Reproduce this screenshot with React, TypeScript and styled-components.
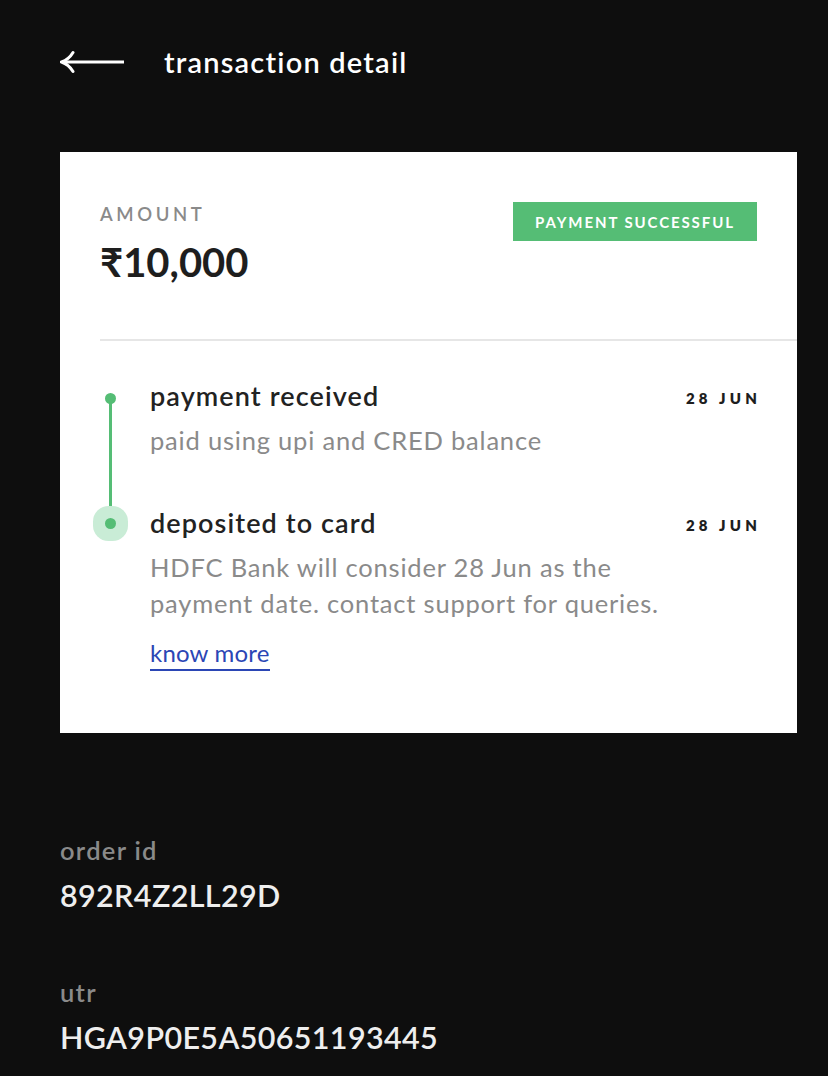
import React from "react";
import styled, { createGlobalStyle } from "styled-components";

const Global = createGlobalStyle`
  html, body { margin: 0; padding: 0; background: #0e0e0e; }
  body { font-family: "Lato", "Open Sans", sans-serif; -webkit-font-smoothing: antialiased; }
  * { box-sizing: border-box; }
`;

const Page = styled.div`
  width: 828px;
  min-height: 1076px;
  padding: 0 31px 0 60px;
  background: #0e0e0e;
`;

const Header = styled.header`
  display: flex;
  align-items: center;
  gap: 40px;
  height: 124px;
`;

const BackButton = styled.button`
  display: flex;
  align-items: center;
  padding: 0;
  border: 0;
  background: none;
  width: 64px;
  height: 24px;
  cursor: pointer;
`;

const Title = styled.h1`
  margin: 0;
  color: #ffffff;
  font-size: 29px;
  font-weight: 600;
  letter-spacing: 1.2px;
  line-height: 36px;
`;

const Card = styled.section`
  margin-top: 28px;
  background: #ffffff;
  padding: 51px 40px 62px 40px;
`;

const TopRow = styled.div`
  display: flex;
  justify-content: space-between;
  align-items: flex-start;
`;

const AmountBlock = styled.div`
  display: flex;
  flex-direction: column;
`;

const AmountLabel = styled.div`
  color: #8a8a8a;
  font-size: 18.5px;
  line-height: 22px;
  letter-spacing: 3.6px;
  font-weight: 600;
`;

const AmountValue = styled.div`
  margin-top: 14px;
  color: #1e1e1e;
  font-size: 40px;
  line-height: 46px;
  font-weight: 700;
`;

const Badge = styled.div`
  margin-top: -1px;
  display: flex;
  align-items: center;
  justify-content: center;
  width: 244px;
  height: 39px;
  background: #55bd75;
  color: #ffffff;
  font-size: 15px;
  font-weight: 700;
  letter-spacing: 1.9px;
`;

const Divider = styled.hr`
  margin: 54px -40px 0 0;
  border: 0;
  height: 2px;
  background: #e6e6e6;
`;

const Timeline = styled.div`
  display: flex;
  flex-direction: column;
  gap: 49px;
  padding-top: 39px;
`;

const Step = styled.div<{ $connect?: boolean }>`
  position: relative;
  display: grid;
  grid-template-columns: 20px 1fr;
  column-gap: 30px;

  ${(p) =>
    p.$connect &&
    `
    &::before {
      content: "";
      position: absolute;
      left: 8.5px;
      top: 19px;
      width: 3px;
      height: 125px;
      background: #55bd75;
    }
  `}
`;

const Marker = styled.div`
  position: relative;
  height: 32px;
  display: flex;
  align-items: center;
  justify-content: center;
`;

const Dot = styled.span<{ $active?: boolean }>`
  position: relative;
  z-index: 1;
  width: 11px;
  height: 11px;
  border-radius: 50%;
  background: #55bd75;
  box-shadow: ${(p) => (p.$active ? "0 0 0 12px #c9ecd6" : "none")};
  margin-top: ${(p) => (p.$active ? "0" : "5px")};
`;

const StepBody = styled.div`
  display: flex;
  flex-direction: column;
`;

const StepHead = styled.div`
  display: flex;
  justify-content: space-between;
  align-items: center;
`;

const StepTitle = styled.div`
  color: #222222;
  font-size: 27px;
  line-height: 32px;
  font-weight: 600;
  letter-spacing: 1.1px;
`;

const StepDate = styled.div`
  color: #1e1e1e;
  font-size: 15px;
  font-weight: 800;
  letter-spacing: 4.2px;
  margin-right: -4px;
  margin-top: 4px;
`;

const StepText = styled.p`
  margin: 10px 0 0 0;
  color: #8a8a8a;
  font-size: 25.5px;
  line-height: 36px;
  letter-spacing: 0.8px;
`;

const MoreLink = styled.a`
  align-self: flex-start;
  margin-top: 17px;
  color: #2b46b5;
  font-size: 24px;
  line-height: 30px;
  text-decoration: none;
  border-bottom: 2px solid #2b46b5;
  padding-bottom: 1px;
  letter-spacing: 0.2px;
`;

const Details = styled.dl`
  margin: 102px 0 0 0;
  display: flex;
  flex-direction: column;
  gap: 64px;
`;

const DetailItem = styled.div`
  display: flex;
  flex-direction: column;
  gap: 12px;
`;

const DetailLabel = styled.dt`
  color: #8a8a8a;
  font-size: 25.5px;
  line-height: 30px;
  font-weight: 600;
  letter-spacing: 1.3px;
`;

const DetailValue = styled.dd`
  margin: 0;
  color: #eeeeee;
  font-size: 30.5px;
  line-height: 36px;
  font-weight: 600;
  letter-spacing: 0.35px;
`;

const BackArrow = () => (
  <svg width="64" height="24" viewBox="0 0 64 24" fill="none">
    <path d="M2 12 H64" stroke="#fff" strokeWidth="3" />
    <path
      d="M13 2.5 C 10 7.5, 6 10.5, 1.5 12 C 6 13.5, 10 16.5, 13 21.5"
      stroke="#fff"
      strokeWidth="3"
      strokeLinecap="round"
      fill="none"
    />
  </svg>
);

export default function App() {
  return (
    <>
      <Global />
      <Page>
        <Header>
          <BackButton aria-label="back">
            <BackArrow />
          </BackButton>
          <Title>transaction detail</Title>
        </Header>

        <Card>
          <TopRow>
            <AmountBlock>
              <AmountLabel>AMOUNT</AmountLabel>
              <AmountValue>₹10,000</AmountValue>
            </AmountBlock>
            <Badge>PAYMENT SUCCESSFUL</Badge>
          </TopRow>
          <Divider />
          <Timeline>
            <Step $connect>
              <Marker>
                <Dot />
              </Marker>
              <StepBody>
                <StepHead>
                  <StepTitle>payment received</StepTitle>
                  <StepDate>28 JUN</StepDate>
                </StepHead>
                <StepText>paid using upi and CRED balance</StepText>
              </StepBody>
            </Step>
            <Step>
              <Marker>
                <Dot $active />
              </Marker>
              <StepBody>
                <StepHead>
                  <StepTitle>deposited to card</StepTitle>
                  <StepDate>28 JUN</StepDate>
                </StepHead>
                <StepText>
                  HDFC Bank will consider 28 Jun as the
                  <br />
                  payment date. contact support for queries.
                </StepText>
                <MoreLink href="#">know more</MoreLink>
              </StepBody>
            </Step>
          </Timeline>
        </Card>

        <Details>
          <DetailItem>
            <DetailLabel>order id</DetailLabel>
            <DetailValue>892R4Z2LL29D</DetailValue>
          </DetailItem>
          <DetailItem>
            <DetailLabel>utr</DetailLabel>
            <DetailValue>HGA9P0E5A50651193445</DetailValue>
          </DetailItem>
        </Details>
      </Page>
    </>
  );
}
